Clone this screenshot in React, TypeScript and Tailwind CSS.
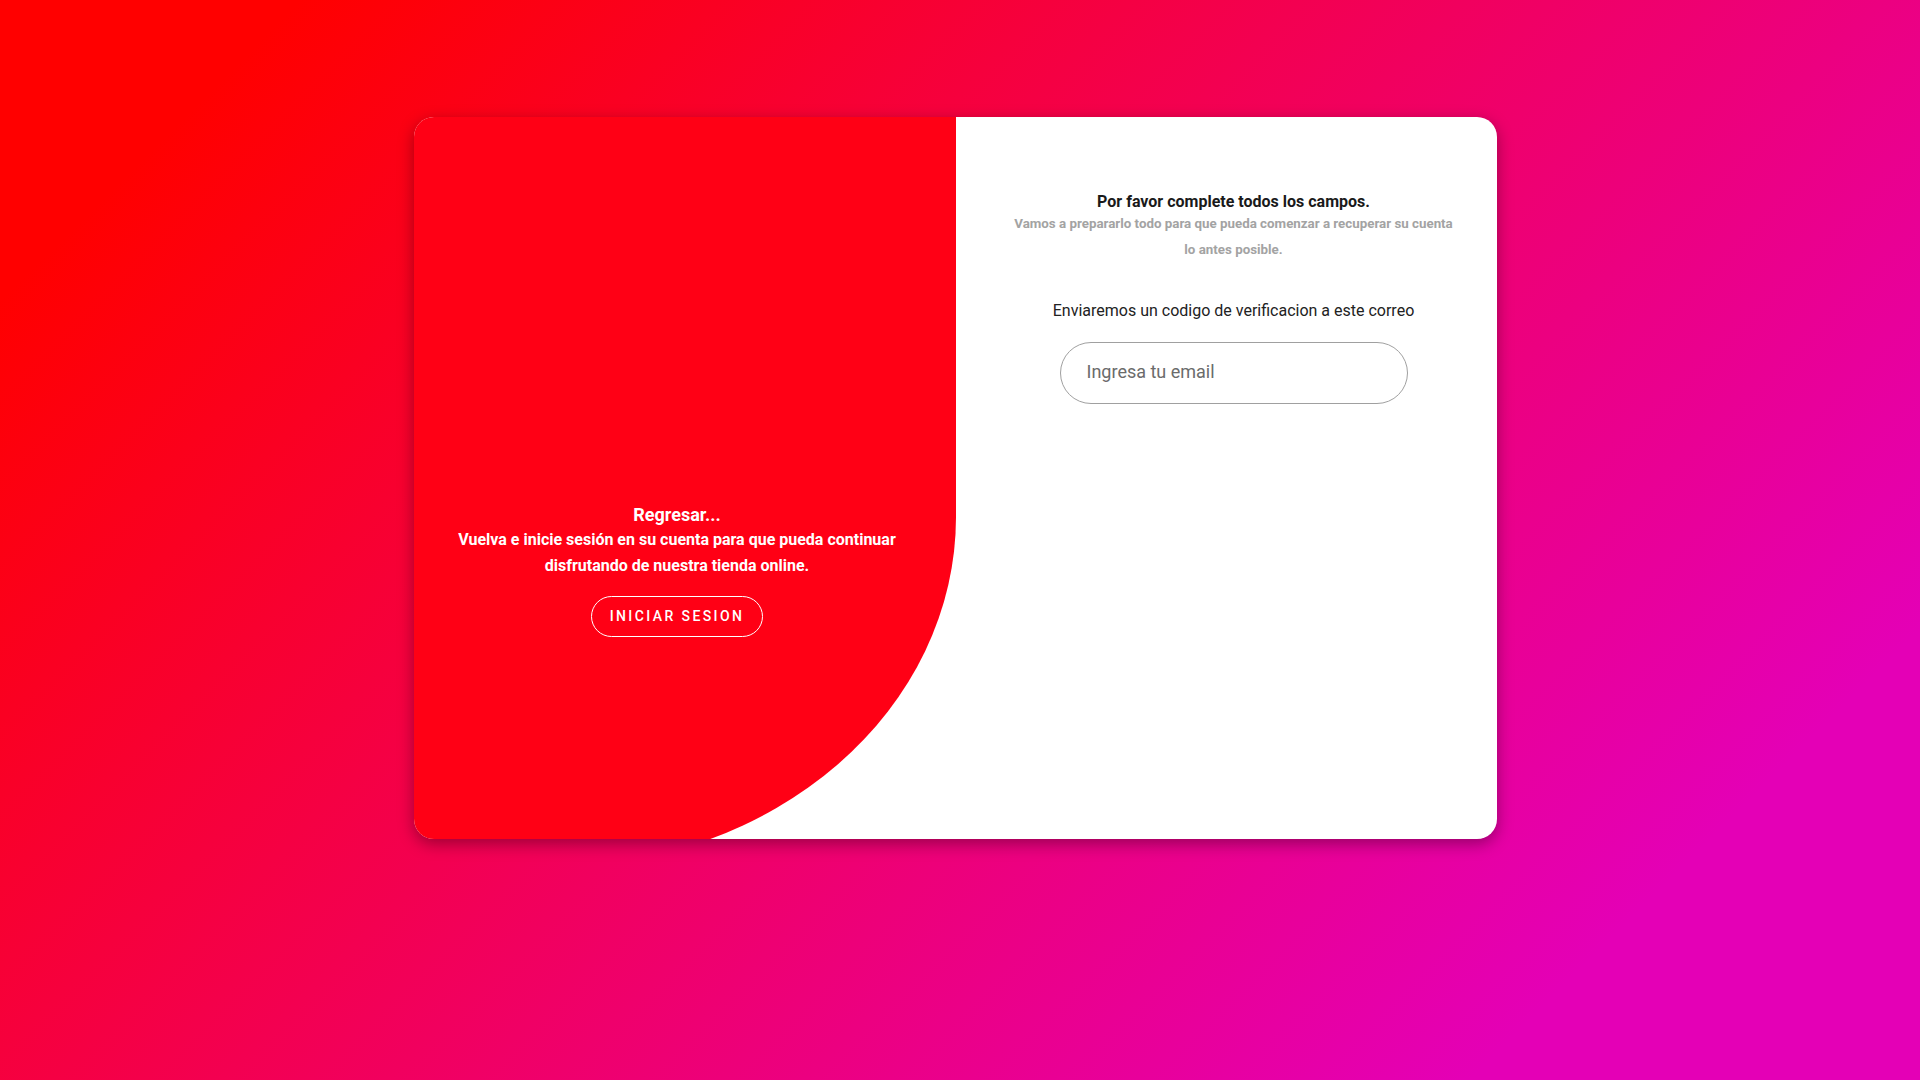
import { useState } from "react";

export default function App() {
  const [email, setEmail] = useState("");

  return (
    <div className="min-h-screen w-full bg-[linear-gradient(135deg,#ff0000_10%,#e400b6_85%)] pt-[117px] font-['Roboto',sans-serif]">
      <div className="ml-[414px] flex h-[722px] w-[1083px] overflow-hidden rounded-[20px] bg-white shadow-[0_5px_16px_rgba(0,0,0,0.35)]">
        {/* left: red panel, the curve runs past the card bottom and gets clipped */}
        <div className="flex h-[750px] w-[542px] shrink-0 flex-col items-center rounded-br-[404px_350px] bg-[#ff0015] pl-[40px] pr-[56px] pt-[386px] text-center text-white">
          <h2 className="text-[18px] font-bold leading-[24px]">Regresar...</h2>
          <p className="text-[16px] font-bold leading-[26px]">
            Vuelva e inicie sesión en su cuenta para que pueda continuar
            disfrutando de nuestra tienda online.
          </p>
          <button
            type="button"
            className="mt-[17px] h-[41px] w-[172px] rounded-full border border-white text-[14px] font-medium tracking-[2.4px] text-white"
          >
            INICIAR SESION
          </button>
        </div>

        {/* right: form */}
        <div className="flex flex-1 flex-col items-center pl-[54px] pr-[40px] pt-[76px] text-center">
          <h3 className="text-[16px] font-bold leading-[18px] text-[#1a1a1a]">
            Por favor complete todos los campos.
          </h3>
          <p className="text-[13.33px] font-bold leading-[26px] text-[#a3a3a3]">
            Vamos a prepararlo todo para que pueda comenzar a recuperar su cuenta
            <br />
            lo antes posible.
          </p>

          <p className="mt-[36px] text-[16px] leading-[24px] text-[#222]">
            Enviaremos un codigo de verificacion a este correo
          </p>
          <input
            type="email"
            value={email}
            onChange={(e) => setEmail(e.target.value)}
            placeholder="Ingresa tu email"
            className="mt-[19px] h-[62px] w-[348px] rounded-full border border-[#a0a0a0] bg-white pb-[3px] pl-[26px] pr-5 text-[18px] text-[#333] placeholder:text-[#6b6b6b] focus:outline-none"
          />
        </div>
      </div>
    </div>
  );
}
